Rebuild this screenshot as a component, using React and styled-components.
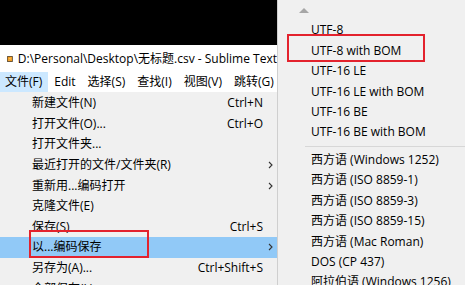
import styled, { createGlobalStyle } from "styled-components";

const GlobalStyle = createGlobalStyle`
  html, body {
    margin: 0;
    padding: 0;
  }
  body {
    width: 465px;
    height: 285px;
    overflow: hidden;
    background: #f0f0f0;
    font-family: "Open Sans", "Noto Sans CJK SC", sans-serif;
    font-size: 12px;
    line-height: 16px;
    color: #000;
  }
`;

const Screen = styled.div`
  display: flex;
  width: 465px;
  height: 285px;
  overflow: hidden;
`;

const WindowColumn = styled.div`
  width: 277px;
  flex: none;
  display: flex;
  flex-direction: column;
  overflow: hidden;
`;

const Desktop = styled.div`
  height: 45px;
  flex: none;
  background: #000;
`;

const TitleBar = styled.div`
  height: 27px;
  flex: none;
  display: flex;
  align-items: center;
  gap: 5px;
  padding-left: 7px;
  background: #fff;
  white-space: nowrap;
  overflow: hidden;
`;

const MenuBar = styled.div`
  height: 20px;
  flex: none;
  display: flex;
  background: #fff;
  white-space: nowrap;
`;

const MenuBarItem = styled.div`
  display: flex;
  align-items: center;
  padding: 0 6px;
  background: ${(p) => (p.$open ? "#cce8ff" : "transparent")};

  &:first-child {
    padding-left: 5px;
  }
`;

const Dropdown = styled.div`
  flex: 1;
  padding-top: 1px;
  background: #f0f0f0;
`;

const MenuItem = styled.div`
  position: relative;
  height: 20.6px;
  display: flex;
  align-items: center;
  padding-left: 32px;
  white-space: nowrap;
  background: ${(p) => (p.$active ? "#91c9f7" : "transparent")};
`;

const Label = styled.span`
  flex: 1;
`;

const Shortcut = styled.span`
  text-align: right;
`;

const ArrowSlot = styled.span`
  width: 14px;
  flex: none;
  display: flex;
  justify-content: center;
  align-items: center;
`;

const Submenu = styled.div`
  width: 187px;
  flex: none;
  display: flex;
  flex-direction: column;
  border-left: 1px solid #cfcfcf;
  background: #f0f0f0;
`;

const ScrollUp = styled.div`
  height: 20px;
  flex: none;
  display: flex;
  align-items: center;
  padding-left: 21px;
`;

const SubItem = styled.div`
  position: relative;
  height: 20.45px;
  flex: none;
  display: flex;
  align-items: center;
  padding-left: 33px;
  white-space: nowrap;
`;

const Separator = styled.div`
  height: 7px;
  flex: none;
  display: flex;
  align-items: center;
  padding-left: 27px;

  &::after {
    content: "";
    flex: 1;
    height: 1px;
    background: #d7d7d7;
  }
`;

const Annotation = styled.div`
  position: absolute;
  top: ${(p) => p.$top}px;
  left: ${(p) => p.$left}px;
  width: ${(p) => p.$width}px;
  height: 28px;
  box-sizing: border-box;
  border: 2px solid #e3222d;
  pointer-events: none;
`;

function SublimeIcon() {
  return (
    <svg width="14" height="14" viewBox="0 0 14 14">
      <rect x="0" y="0" width="14" height="14" rx="1.5" fill="#3c3c3c" />
      <rect x="1.5" y="1.5" width="11" height="11" fill="#f29a1f" />
      <path d="M4 5.2 L10 3.2 L10 5.4 L4 7.4 Z" fill="#ffcf6a" />
      <path d="M4 8.6 L10 6.6 L10 8.8 L4 10.8 Z" fill="#ffcf6a" />
      <path d="M4 7.4 L10 8.8" stroke="#c26d0c" strokeWidth="0.8" />
    </svg>
  );
}

function Chevron() {
  return (
    <svg width="5" height="8" viewBox="0 0 5 8">
      <path d="M1 1 L4 4 L1 7" fill="none" stroke="#333" strokeWidth="1.1" />
    </svg>
  );
}

function UpTriangle() {
  return (
    <svg width="10" height="5" viewBox="0 0 10 5">
      <path d="M0 5 L5 0 L10 5 Z" fill="#a6a6a6" />
    </svg>
  );
}

const menuBar = ["文件(F)", "Edit", "选择(S)", "查找(I)", "视图(V)", "跳转(G)"];

const fileMenu = [
  { label: "新建文件(N)", shortcut: "Ctrl+N" },
  { label: "打开文件(O)...", shortcut: "Ctrl+O" },
  { label: "打开文件夹..." },
  { label: "最近打开的文件/文件夹(R)", sub: true },
  { label: "重新用...编码打开", sub: true },
  { label: "克隆文件(E)" },
  { label: "保存(S)", shortcut: "Ctrl+S" },
  { label: "以...编码保存", sub: true, active: true, marked: true },
  { label: "另存为(A)...", shortcut: "Ctrl+Shift+S" },
  { label: "全部保存(L)" },
];

const encodings = [
  "UTF-8",
  "UTF-8 with BOM",
  "UTF-16 LE",
  "UTF-16 LE with BOM",
  "UTF-16 BE",
  "UTF-16 BE with BOM",
  "-",
  "西方语 (Windows 1252)",
  "西方语 (ISO 8859-1)",
  "西方语 (ISO 8859-3)",
  "西方语 (ISO 8859-15)",
  "西方语 (Mac Roman)",
  "DOS (CP 437)",
  "阿拉伯语 (Windows 1256)",
];

export default function App() {
  return (
    <>
      <GlobalStyle />
      <Screen>
        <WindowColumn>
          <Desktop />
          <TitleBar>
            <SublimeIcon />
            <span>D:\Personal\Desktop\无标题.csv - Sublime Text</span>
          </TitleBar>
          <MenuBar>
            {menuBar.map((m, i) => (
              <MenuBarItem key={m} $open={i === 0}>
                {m}
              </MenuBarItem>
            ))}
          </MenuBar>
          <Dropdown>
            {fileMenu.map((item) => (
              <MenuItem key={item.label} $active={item.active}>
                <Label>{item.label}</Label>
                {item.shortcut && <Shortcut>{item.shortcut}</Shortcut>}
                <ArrowSlot>{item.sub && <Chevron />}</ArrowSlot>
                {item.marked && <Annotation $top={-7} $left={29} $width={120} />}
              </MenuItem>
            ))}
          </Dropdown>
        </WindowColumn>
        <Submenu>
          <ScrollUp>
            <UpTriangle />
          </ScrollUp>
          {encodings.map((e, i) =>
            e === "-" ? (
              <Separator key={i} />
            ) : (
              <SubItem key={e}>
                {e}
                {e === "UTF-8 with BOM" && (
                  <Annotation $top={-6.5} $left={9} $width={138} />
                )}
              </SubItem>
            )
          )}
        </Submenu>
      </Screen>
    </>
  );
}
